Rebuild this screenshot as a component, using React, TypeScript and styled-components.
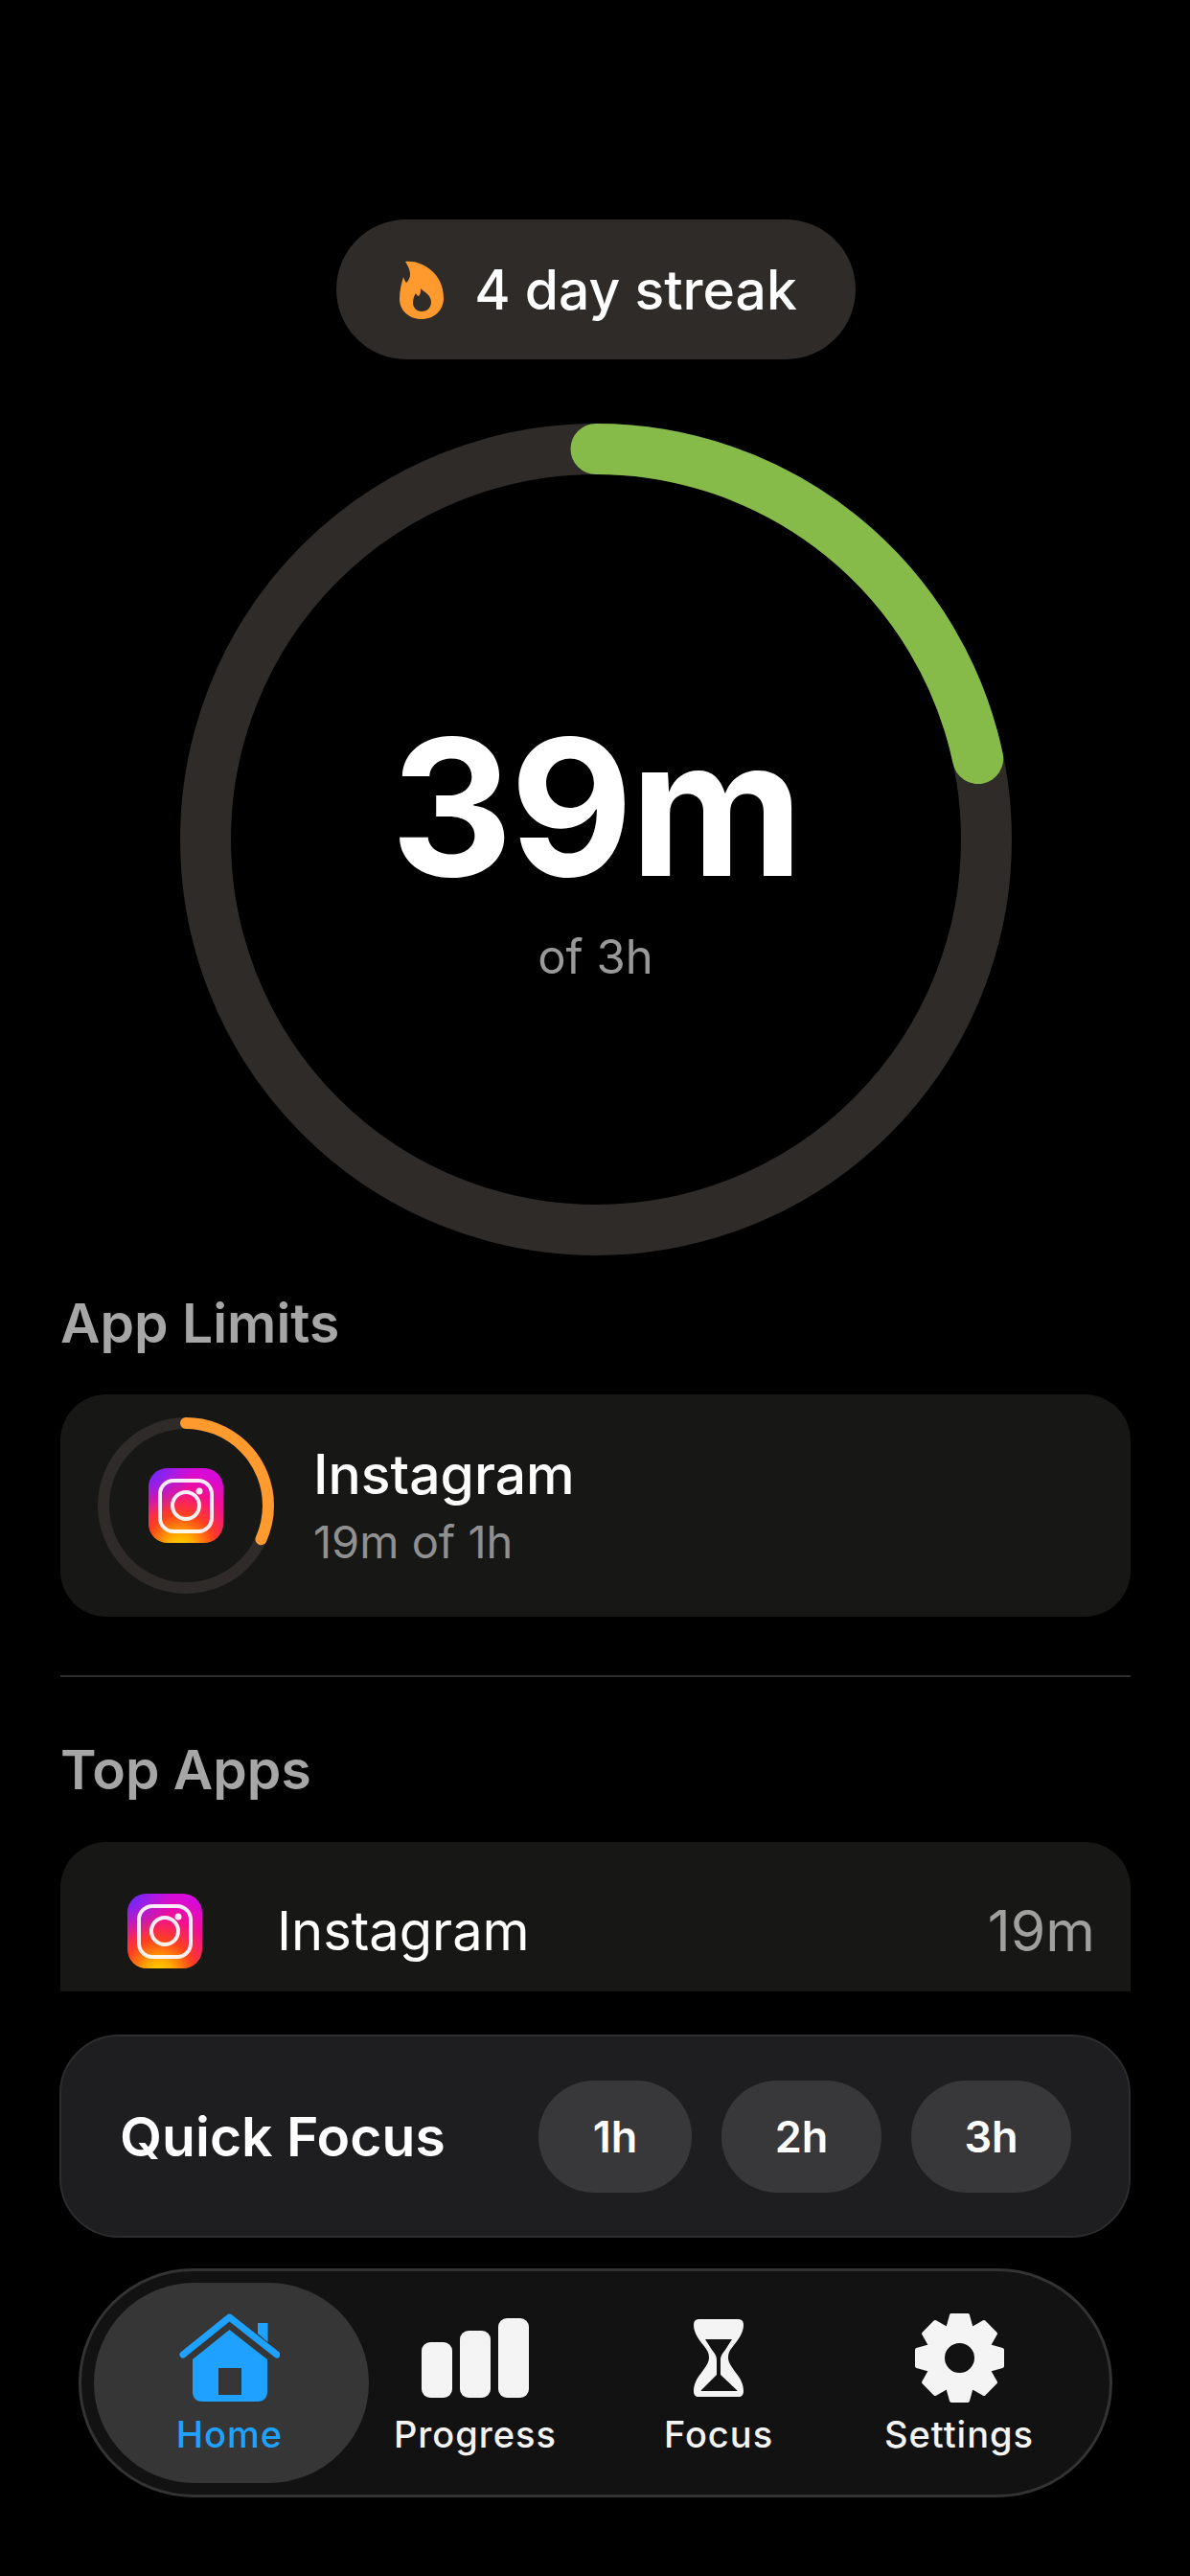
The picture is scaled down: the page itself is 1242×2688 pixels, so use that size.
import React from 'react';
import styled, { createGlobalStyle } from 'styled-components';

const GlobalStyle = createGlobalStyle`
  html, body {
    margin: 0;
    padding: 0;
    background: #000;
  }
  * {
    box-sizing: border-box;
  }
`;

const Page = styled.div`
  width: 1242px;
  height: 2688px;
  background: #000;
  overflow: hidden;
  font-family: Inter, 'Noto Sans', sans-serif;
  color: #fff;
`;

const ScrollArea = styled.div`
  height: 2078px;
  overflow: hidden;
  padding: 229px 62px 0 63px;
  display: flex;
  flex-direction: column;
  > * {
    flex: none;
  }
`;

const StreakPill = styled.div`
  align-self: center;
  width: 542px;
  height: 146px;
  padding-left: 6px;
  border-radius: 73px;
  background: #2e2b28;
  display: flex;
  align-items: center;
  justify-content: center;
  gap: 32px;
  font-size: 57px;
  font-weight: 500;
`;

const RingWrap = styled.div`
  align-self: center;
  margin-top: 67px;
  width: 868px;
  height: 868px;
  display: grid;
  > * {
    grid-area: 1 / 1;
  }
`;

const RingCenter = styled.div`
  display: flex;
  flex-direction: column;
  align-items: center;
  padding-top: 300px;
`;

const BigTime = styled.div`
  font-size: 198px;
  line-height: 200px;
  font-weight: 700;
  letter-spacing: -3px;
`;

const OfTotal = styled.div`
  margin-top: 28px;
  font-size: 49px;
  line-height: 58px;
  color: #999;
`;

const SectionTitle = styled.div`
  font-size: 57px;
  line-height: 68px;
  font-weight: 600;
  color: #a6a6a6;
`;

const LimitsTitle = styled(SectionTitle)`
  margin-top: 37px;
`;

const Card = styled.div`
  background: #171716;
  border-radius: 48px;
  width: 100%;
  display: flex;
  align-items: center;
`;

const LimitCard = styled(Card)`
  height: 232px;
  margin-top: 40px;
  padding-left: 39px;
  gap: 41px;
`;

const RingIcon = styled.div`
  width: 184px;
  height: 184px;
  display: grid;
  place-items: center;
  > * {
    grid-area: 1 / 1;
  }
`;

const AppName = styled.div`
  font-size: 57px;
  line-height: 62px;
  font-weight: 500;
`;

const AppSub = styled.div`
  font-size: 47px;
  line-height: 52px;
  margin-top: 13px;
  color: #909090;
`;

const Divider = styled.div`
  height: 2px;
  background: #2f2e2d;
  margin-top: 61px;
`;

const TopTitle = styled(SectionTitle)`
  margin-top: 63px;
`;

const TopCard = styled(Card)`
  height: 240px;
  margin-top: 41px;
  padding: 0 37px 55px 70px;
`;

const TopName = styled.div`
  margin-left: 78px;
  flex: 1;
  font-size: 56px;
  font-weight: 400;
`;

const TopTime = styled.div`
  font-size: 59px;
  color: #a0a0a0;
`;

const FocusCard = styled.div`
  margin: 45px 62px 0;
  height: 212px;
  border-radius: 62px;
  background: #1e1e20;
  border: 2px solid #2d2d2f;
  display: flex;
  align-items: center;
  padding: 0 60px 0 61px;
`;

const FocusTitle = styled.div`
  flex: 1;
  font-size: 57px;
  font-weight: 600;
`;

const FocusOptions = styled.div`
  display: flex;
  gap: 31px;
`;

const FocusOption = styled.div<{ $w: number }>`
  width: ${p => p.$w}px;
  height: 117px;
  border-radius: 58px;
  background: #38383a;
  display: flex;
  align-items: center;
  justify-content: center;
  font-size: 45px;
  font-weight: 600;
`;

const TabBar = styled.nav`
  margin: 32px 81px 0 82px;
  height: 239px;
  border-radius: 120px;
  background: #121212;
  border: 3px solid #333;
  padding: 12px 13px;
  display: grid;
  grid-template-columns: 287px 222px 286px 216px;
`;

const TabItem = styled.div<{ $active?: boolean }>`
  height: 209px;
  border-radius: 105px;
  background: ${p => (p.$active ? '#363636' : 'transparent')};
  color: ${p => (p.$active ? '#1fa2ff' : '#f4f4f4')};
  display: flex;
  flex-direction: column;
  align-items: center;
  padding: 28px ${p => (p.$active ? '4px' : '0')} 0 0;
`;

const TabIcon = styled.div`
  height: 100px;
  display: flex;
  align-items: center;
  justify-content: center;
`;

const TabLabel = styled.div`
  margin-top: 8px;
  font-size: 38px;
  line-height: 44px;
  font-weight: 500;
  letter-spacing: 1px;
`;

const Flame = () => (
  <svg width="46" height="61" viewBox="0 0 46 61">
    <path
      fill="#ff9a2e"
      fillRule="evenodd"
      d="M6 1C22-1 46 12 46 39 46 52 36 61 23 61 10 61 0 52 0 40 0 31 2 24 4 17 5 20 6 22 7 23 11 19 14 13 6 1ZM22 29C23 31 33 35 33 43 33 49 29 53 23 53 18 53 14 49 14 44 14 40 15 37 17 34 18 36 19 37 20 37 22 35 22 32 22 29Z"
    />
  </svg>
);

const InstagramIcon = ({ id }: { id: string }) => (
  <svg width="78" height="78" viewBox="0 0 78 78">
    <defs>
      <radialGradient id={`${id}-base`} cx="0.42" cy="1.08" r="1.12">
        <stop offset="0" stopColor="#ffdd00" />
        <stop offset="0.18" stopColor="#ffa800" />
        <stop offset="0.42" stopColor="#ff3f20" />
        <stop offset="0.68" stopColor="#f3108c" />
        <stop offset="0.95" stopColor="#d80ad8" />
      </radialGradient>
      <radialGradient id={`${id}-tl`} cx="0" cy="0" r="0.62">
        <stop offset="0" stopColor="#5a2cff" />
        <stop offset="1" stopColor="#7a2cff" stopOpacity="0" />
      </radialGradient>
    </defs>
    <rect width="78" height="78" rx="20" fill={`url(#${id}-base)`} />
    <rect width="78" height="78" rx="20" fill={`url(#${id}-tl)`} />
    <rect x="12" y="13" width="54" height="53" rx="14" fill="none" stroke="#fff" strokeOpacity="0.92" strokeWidth="4" />
    <circle cx="39" cy="39" r="14" fill="none" stroke="#fff" strokeOpacity="0.92" strokeWidth="4" />
    <circle cx="53" cy="24" r="3.500" fill="#fff" fillOpacity="0.92" />
  </svg>
);

const HomeIcon = () => (
  <svg width="105" height="93" viewBox="0 0 105 93" fill="#1fa2ff">
    <path d="M82 10h10.500v20L82 21z" />
    <path
      d="M4 43 52.500 4 102 43"
      fill="none"
      stroke="#1fa2ff"
      strokeWidth="7"
      strokeLinecap="round"
      strokeLinejoin="round"
    />
    <path
      fillRule="evenodd"
      d="M52.500 17 92 48v34c0 6-4 10-10 10H24c-6 0-10-4-10-10V48zM41 57v28h24V57z"
    />
  </svg>
);

const BarsIcon = () => (
  <svg width="112" height="83" viewBox="0 0 112 83" fill="#f4f4f4">
    <rect x="0" y="25" width="32" height="58" rx="9" />
    <rect x="40" y="13" width="32" height="70" rx="9" />
    <rect x="80" y="0" width="32" height="83" rx="9" />
  </svg>
);

const HourglassIcon = () => (
  <svg width="52" height="81" viewBox="0 0 52 81" fill="#f4f4f4">
    <path
      fillRule="evenodd"
      d="M6 0H46C50 0 52 2 52 6 52 14 47 21 42 27 38 32 36 35 36 40 36 45 39 49 44 56 49 62 52 68 52 75 52 79 50 81 47 81H5C2 81 0 79 0 75 0 68 3 62 8 56 13 49 16 45 16 40 16 35 14 32 10 27 5 21 0 14 0 6 0 2 2 0 6 0ZM12 21H40L33 32C29 37 28 39 28 43V58L45 74C46 75 45 75 44 75H9C8 75 7 75 8 74L24 58V43C24 39 23 37 19 32Z"
    />
  </svg>
);

const GearIcon = () => {
  const teeth = Array.from({ length: 8 }, (_, i) => i * 45);
  return (
    <svg width="93" height="93" viewBox="0 0 93 93" fill="#f4f4f4">
      {teeth.map(a => (
        <path
          key={a}
          d="M33 20 38 2H55L60 20Z"
          stroke="#f4f4f4"
          strokeWidth="4"
          strokeLinejoin="round"
          transform={`rotate(${a} 46.500 46.500)`}
        />
      ))}
      <path
        fillRule="evenodd"
        d="M46.500 12a34.500 34.500 0 1 0 0 69 34.500 34.500 0 0 0 0-69zm0 19a15.500 15.500 0 1 1 0 31 15.500 15.500 0 0 1 0-31z"
      />
    </svg>
  );
};

const Ring = ({
  size,
  stroke,
  track,
  color,
  progress,
}: {
  size: number;
  stroke: number;
  track: string;
  color: string;
  progress: number;
}) => {
  const r = (size - stroke) / 2;
  const c = 2 * Math.PI * r;
  return (
    <svg width={size} height={size} viewBox={`0 0 ${size} ${size}`}>
      <circle cx={size / 2} cy={size / 2} r={r} fill="none" stroke={track} strokeWidth={stroke} />
      <circle
        cx={size / 2}
        cy={size / 2}
        r={r}
        fill="none"
        stroke={color}
        strokeWidth={stroke}
        strokeLinecap="round"
        strokeDasharray={`${c * progress} ${c}`}
        transform={`rotate(-90 ${size / 2} ${size / 2})`}
      />
    </svg>
  );
};

const focusOptions = [
  { label: '1h', w: 160 },
  { label: '2h', w: 167 },
  { label: '3h', w: 167 },
];

const tabs = [
  { label: 'Home', icon: <HomeIcon />, active: true },
  { label: 'Progress', icon: <BarsIcon /> },
  { label: 'Focus', icon: <HourglassIcon /> },
  { label: 'Settings', icon: <GearIcon /> },
];

export default function App() {
  return (
    <Page>
      <GlobalStyle />
      <ScrollArea>
        <StreakPill>
          <Flame />
          <span>4 day streak</span>
        </StreakPill>
        <RingWrap>
          <Ring size={868} stroke={53} track="#2e2b28" color="#86bb4a" progress={39 / 180} />
          <RingCenter>
            <BigTime>39m</BigTime>
            <OfTotal>of 3h</OfTotal>
          </RingCenter>
        </RingWrap>
        <LimitsTitle>App Limits</LimitsTitle>
        <LimitCard>
          <RingIcon>
            <Ring size={184} stroke={12} track="#2e2b28" color="#ff9a2e" progress={19 / 60} />
            <InstagramIcon id="limit" />
          </RingIcon>
          <div>
            <AppName>Instagram</AppName>
            <AppSub>19m of 1h</AppSub>
          </div>
        </LimitCard>
        <Divider />
        <TopTitle>Top Apps</TopTitle>
        <TopCard>
          <InstagramIcon id="top" />
          <TopName>Instagram</TopName>
          <TopTime>19m</TopTime>
        </TopCard>
      </ScrollArea>
      <FocusCard>
        <FocusTitle>Quick Focus</FocusTitle>
        <FocusOptions>
          {focusOptions.map(o => (
            <FocusOption key={o.label} $w={o.w}>
              {o.label}
            </FocusOption>
          ))}
        </FocusOptions>
      </FocusCard>
      <TabBar>
        {tabs.map(t => (
          <TabItem key={t.label} $active={t.active}>
            <TabIcon>{t.icon}</TabIcon>
            <TabLabel>{t.label}</TabLabel>
          </TabItem>
        ))}
      </TabBar>
    </Page>
  );
}
